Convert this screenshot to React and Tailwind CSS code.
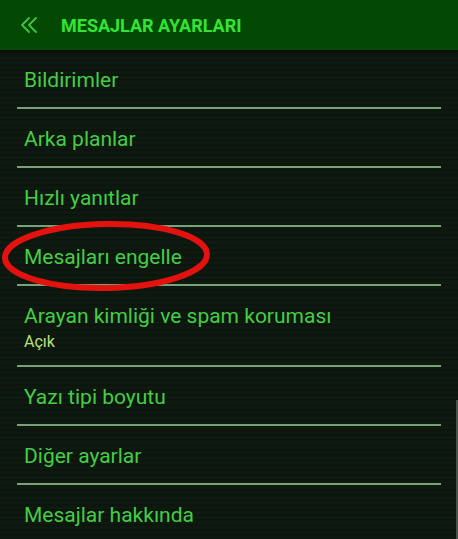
import React from 'react';

const items = [
  { title: 'Bildirimler' },
  { title: 'Arka planlar' },
  { title: 'Hızlı yanıtlar' },
  { title: 'Mesajları engelle' },
  { title: 'Arayan kimliği ve spam koruması', sub: 'Açık' },
  { title: 'Yazı tipi boyutu' },
  { title: 'Diğer ayarlar' },
  { title: 'Mesajlar hakkında' },
];

export default function App() {
  return (
    <div
      className="relative w-[458px] h-[539px] overflow-hidden bg-[#0c150d] bg-[repeating-linear-gradient(180deg,#0d170e_0px,#0d170e_2px,#101c11_3px,#0a120b_5px)]"
      style={{ fontFamily: 'Roboto, "Noto Sans", sans-serif' }}
    >
      {/* header */}
      <div className="h-[50px] bg-[#034803] flex items-center shadow-[0_2px_3px_rgba(0,0,0,0.6)]">
        <svg className="ml-[20px]" width="18" height="16" viewBox="0 0 18 16" fill="none">
          <path d="M9 1 L2 8 L9 15 M16 1 L9 8 L16 15" stroke="#3fc43f" strokeWidth="1.8" strokeLinecap="round" strokeLinejoin="round" />
        </svg>
        <span className="ml-[23px] text-[18px] font-bold text-[#33e433]">
          MESAJLAR AYARLARI
        </span>
      </div>

      {/* list */}
      <div className="px-[17px]">
        {items.map((it) => (
          <div
            key={it.title}
            className={`flex flex-col justify-center pl-[7px] pt-[3px] border-b-2 border-[#78a278] ${
              it.sub ? 'h-[81px]' : 'h-[59px]'
            }`}
          >
            <span className="text-[21px] leading-[26px] text-[#45cd45]">{it.title}</span>
            {it.sub && (
              <span className="text-[16px] leading-[20px] text-[#b9e07a] mt-[3px]">{it.sub}</span>
            )}
          </div>
        ))}
      </div>

      {/* scrollbar hint */}
      <div className="absolute right-0 top-[400px] w-[2px] h-[139px] bg-[#4a524a]" />

      {/* red marker ellipse */}
      <svg className="absolute left-0 top-[218px]" width="215" height="78" viewBox="0 0 215 78" fill="none">
        <ellipse cx="106" cy="38" rx="101" ry="32" stroke="#e3120f" strokeWidth="6" transform="rotate(-1 106 38)" />
      </svg>
    </div>
  );
}
